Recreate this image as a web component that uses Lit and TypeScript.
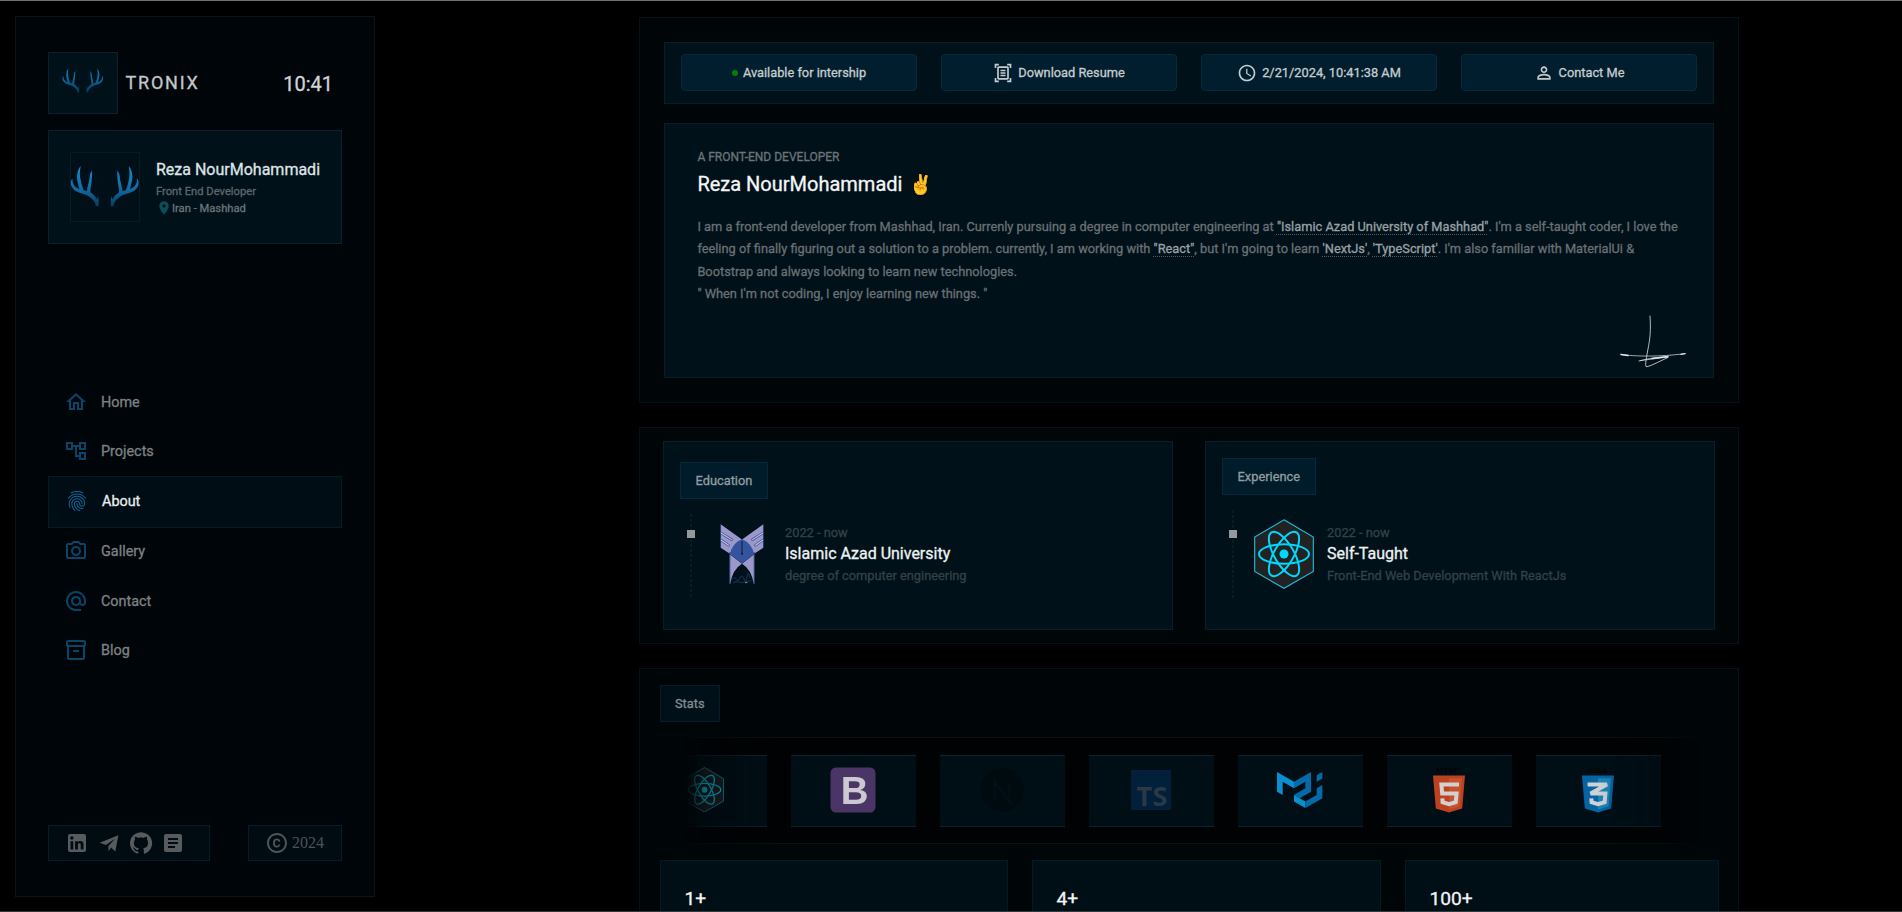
import { LitElement, html, svg, css } from "lit";
import { customElement, state } from "lit/decorators.js";
import { classMap } from "lit/directives/class-map.js";

const ICONS: Record<string, string> = {
  home: "M12 5.69l5 4.5V18h-2v-6H9v6H7v-7.81l5-4.5M12 3L2 12h3v8h6v-6h2v6h6v-8h3L12 3z",
  tree: "M22 11V3h-7v3H9V3H2v8h7V8h2v10h4v3h7v-8h-7v3h-2V8h2v3h7zM7 9H4V5h3v4zm10 6h3v4h-3v-4zm0-10h3v4h-3V5z",
  finger:
    "M17.81 4.47c-.08 0-.16-.02-.23-.06C15.66 3.42 14 3 12.01 3c-1.98 0-3.86.47-5.57 1.41-.24.13-.54.04-.68-.2-.13-.24-.04-.55.2-.68C7.82 2.52 9.86 2 12.01 2c2.13 0 3.99.47 6.03 1.52.25.13.34.43.21.67-.09.18-.26.28-.44.28zM3.5 9.72c-.1 0-.2-.03-.29-.09-.23-.16-.28-.47-.12-.7.99-1.4 2.25-2.5 3.75-3.27C9.98 4.04 14 4.03 17.15 5.65c1.5.77 2.76 1.86 3.75 3.25.16.22.11.54-.12.7-.23.16-.54.11-.7-.12-.9-1.26-2.04-2.25-3.39-2.94-2.87-1.47-6.54-1.47-9.4.01-1.36.7-2.5 1.7-3.4 2.96-.08.14-.23.21-.39.21zm6.25 12.07c-.13 0-.26-.05-.35-.15-.87-.87-1.34-1.43-2.01-2.64-.69-1.23-1.05-2.73-1.05-4.34 0-2.97 2.54-5.39 5.66-5.39s5.66 2.42 5.66 5.39c0 .28-.22.5-.5.5s-.5-.22-.5-.5c0-2.42-2.09-4.39-4.66-4.39-2.57 0-4.66 1.97-4.66 4.39 0 1.44.32 2.77.93 3.85.64 1.15 1.08 1.64 1.85 2.42.19.2.19.51 0 .71-.11.1-.24.15-.37.15zm7.17-1.85c-1.19 0-2.24-.3-3.1-.89-1.49-1.01-2.38-2.65-2.38-4.39 0-.28.22-.5.5-.5s.5.22.5.5c0 1.41.72 2.74 1.94 3.56.71.48 1.54.71 2.54.71.24 0 .64-.03 1.04-.1.27-.05.53.13.58.41.05.27-.13.53-.41.58-.57.11-1.07.12-1.21.12zM14.91 22c-.04 0-.09-.01-.13-.02-1.59-.44-2.63-1.03-3.72-2.1-1.4-1.39-2.17-3.24-2.17-5.22 0-1.62 1.38-2.94 3.08-2.94 1.7 0 3.08 1.32 3.08 2.94 0 1.07.93 1.94 2.08 1.94s2.08-.87 2.08-1.94c0-3.77-3.25-6.83-7.25-6.83-2.84 0-5.44 1.58-6.61 4.03-.39.81-.59 1.76-.59 2.8 0 .78.07 2.01.67 3.61.1.26-.03.55-.29.64-.26.1-.55-.04-.64-.29-.49-1.31-.73-2.61-.73-3.96 0-1.2.23-2.29.68-3.24 1.33-2.79 4.28-4.6 7.51-4.6 4.55 0 8.25 3.51 8.25 7.83 0 1.62-1.38 2.94-3.08 2.94s-3.08-1.32-3.08-2.94c0-1.07-.93-1.94-2.08-1.94s-2.08.87-2.08 1.94c0 1.71.66 3.31 1.87 4.51.95.94 1.86 1.46 3.27 1.85.27.07.42.35.35.61-.05.23-.26.38-.47.38z",
  camera:
    "M14.12 4l1.83 2H20v12H4V6h4.05l1.83-2h4.24M15 2H9L7.17 4H4c-1.1 0-2 .9-2 2v12c0 1.1.9 2 2 2h16c1.1 0 2-.9 2-2V6c0-1.1-.9-2-2-2h-3.17L15 2zm-3 7c1.65 0 3 1.35 3 3s-1.35 3-3 3-3-1.35-3-3 1.35-3 3-3m0-2c-2.76 0-5 2.24-5 5s2.24 5 5 5 5-2.24 5-5-2.24-5-5-5z",
  at: "M12 2C6.48 2 2 6.48 2 12s4.48 10 10 10h5v-2h-5c-4.34 0-8-3.66-8-8s3.66-8 8-8 8 3.66 8 8v1.43c0 .79-.71 1.57-1.5 1.57s-1.5-.78-1.5-1.57V12c0-2.76-2.24-5-5-5s-5 2.24-5 5 2.24 5 5 5c1.38 0 2.64-.56 3.54-1.47.65.89 1.77 1.47 2.96 1.47 1.97 0 3.5-1.6 3.5-3.57V12c0-5.52-4.48-10-10-10zm0 13c-1.66 0-3-1.34-3-3s1.34-3 3-3 3 1.34 3 3-1.34 3-3 3z",
  box: "M20 2H4c-1 0-2 .9-2 2v3.01c0 .72.43 1.34 1 1.69V20c0 1.1 1.1 2 2 2h14c.9 0 2-.9 2-2V8.7c.57-.35 1-.97 1-1.69V4c0-1.1-1-2-2-2zm-1 18H5V9h14v11zm1-13H4V4h16v3zM9 12h6v2H9z",
  linkedin:
    "M19 3a2 2 0 0 1 2 2v14a2 2 0 0 1-2 2H5a2 2 0 0 1-2-2V5a2 2 0 0 1 2-2h14m-.5 15.5v-5.3a3.26 3.26 0 0 0-3.26-3.26c-.85 0-1.84.52-2.32 1.3v-1.11h-2.79v8.37h2.79v-4.93c0-.77.62-1.4 1.39-1.4a1.4 1.4 0 0 1 1.4 1.4v4.93h2.79M6.88 8.56a1.68 1.68 0 0 0 1.68-1.68c0-.93-.75-1.69-1.68-1.69a1.69 1.69 0 0 0-1.69 1.69c0 .93.76 1.68 1.69 1.68m1.39 9.94v-8.37H5.5v8.37h2.77z",
  plane: "M21.4 4.2L2.6 11.7l6.3 2.4L18.3 7.4l-6.9 7.6.1 5.2 2.6-3.6 4.2 4z",
  github:
    "M12 1.27a11 11 0 00-3.48 21.46c.55.09.73-.28.73-.55v-1.84c-3.03.64-3.67-1.46-3.67-1.46-.55-1.29-1.28-1.65-1.28-1.65-.92-.65.1-.65.1-.65 1.1 0 1.73 1.1 1.73 1.1.92 1.65 2.57 1.2 3.21.92a2 2 0 01.64-1.47c-2.47-.27-5.04-1.19-5.04-5.5 0-1.1.46-2.1 1.2-2.84a3.76 3.76 0 010-2.93s.91-.28 3.11 1.1c1.8-.49 3.7-.49 5.5 0 2.1-1.38 3.02-1.1 3.02-1.1a3.76 3.76 0 01.1 2.93c.83.74 1.2 1.74 1.2 2.94 0 4.21-2.57 5.13-5.04 5.4.45.37.82.92.82 2.02v3.03c0 .27.1.64.73.55A11 11 0 0012 1.27",
  article:
    "M19 3H5c-1.1 0-2 .9-2 2v14c0 1.1.9 2 2 2h14c1.1 0 2-.9 2-2V5c0-1.1-.9-2-2-2zm-5 14H7v-2h7v2zm3-4H7v-2h10v2zm0-4H7V7h10v2z",
  copyright:
    "M11.88 9.14c1.28.06 1.61 1.15 1.63 1.66h1.79c-.08-1.98-1.49-3.19-3.45-3.19C9.64 7.61 8 9 8 12.14c0 1.94.93 4.24 3.84 4.24 2.22 0 3.41-1.65 3.44-2.95h-1.79c-.03.59-.45 1.38-1.63 1.44-1.31-.04-1.86-1.06-1.86-2.73 0-2.89 1.28-2.98 1.88-3zM12 2C6.48 2 2 6.48 2 12s4.48 10 10 10 10-4.48 10-10S17.52 2 12 2zm0 18c-4.41 0-8-3.59-8-8s3.59-8 8-8 8 3.59 8 8-3.59 8-8 8z",
  scan: "M7 3H4v3H2V1h5v2zm15 3V1h-5v2h3v3h2zM7 21H4v-3H2v5h5v-2zm13-3v3h-3v2h5v-5h-2zM17 6H7v12h10V6zm2 12c0 1.1-.9 2-2 2H7c-1.1 0-2-.9-2-2V6c0-1.1.9-2 2-2h10c1.1 0 2 .9 2 2v12zM15 8H9v2h6V8zm0 3H9v2h6v-2zm0 3H9v2h6v-2z",
  clock:
    "M11.99 2C6.47 2 2 6.48 2 12s4.47 10 9.99 10C17.52 22 22 17.52 22 12S17.52 2 11.99 2zM12 20c-4.42 0-8-3.58-8-8s3.58-8 8-8 8 3.58 8 8-3.58 8-8 8zm.5-13H11v6l5.25 3.15.75-1.23-4.5-2.67z",
  person:
    "M12 5.9c1.16 0 2.1.94 2.1 2.1s-.94 2.1-2.1 2.1S9.9 9.16 9.9 8s.94-2.1 2.1-2.1m0 9c2.97 0 6.1 1.46 6.1 2.1v1.1H5.9V17c0-.64 3.13-2.1 6.1-2.1M12 4C9.79 4 8 5.79 8 8s1.79 4 4 4 4-1.79 4-4-1.79-4-4-4zm0 9c-2.67 0-8 1.34-8 4v3h16v-3c0-2.66-5.33-4-8-4z",
  pin: "M12 2C8.13 2 5 5.13 5 9c0 5.25 7 13 7 13s7-7.75 7-13c0-3.87-3.13-7-7-7zm0 9.5c-1.38 0-2.5-1.12-2.5-2.5s1.12-2.5 2.5-2.5 2.5 1.12 2.5 2.5-1.12 2.5-2.5 2.5z",
};

const icon = (name: string, size = 24) =>
  html`<svg class="icon" width=${size} height=${size} viewBox="0 0 24 24"><path d=${ICONS[name]} fill-rule="evenodd"></path></svg>`;

const ANTLER =
  "M28.5 54.5L25.6 54C26 50.4 23 47 17.5 43.4C13 41.4 7 41 3.5 37.2C.2 33.5-.2 29 2.6 26.4C2 30.5 3.5 34 7 36L9.4 37C8 31 6 27 7.6 20.5C8.2 17.5 9.4 15.5 10.7 14.2C9.9 19 9.3 22 10.7 28C11.2 32 12.5 35 13.5 38L16.8 39.2C17.8 33 19.6 28 19.8 24C20 22 20.8 20 22 18.5C22.2 23 22 27 21.2 33C20.6 36 20.2 38 20.6 40.5C23.5 42.5 26 45 27 47.5L28 44.3C29 48 28.6 50 28.5 54.5Z";

const antlers = (size: number, dim: boolean) => html`
  <svg class="icon" width=${size} height=${size} viewBox="0 0 70 70" opacity=${dim ? 0.85 : 1}>
    <defs>
      <linearGradient id="ag" gradientUnits="userSpaceOnUse" x1="0" y1="14" x2="0" y2="55">
        <stop offset="0" stop-color="#1390d8"></stop>
        <stop offset=".55" stop-color="#0f6ca6"></stop>
        <stop offset="1" stop-color="#093a58"></stop>
      </linearGradient>
    </defs>
    <path fill="url(#ag)" d=${ANTLER}></path>
    <path fill="url(#ag)" d=${ANTLER} transform="translate(69.4 0) scale(-1 1)"></path>
  </svg>`;

const reactLogo = (w: number, h: number) => html`
  <svg class="icon" width=${w} height=${h} viewBox="0 0 60 70">
    <path d="M30 .8L59.3 18V52.5L30 69.3L.7 52.5V18Z" fill="#222" stroke="#19bfe0" stroke-width="1.1"></path>
    <g fill="none" stroke="#00d8ff" stroke-width="2">
      <ellipse cx="30" cy="35" rx="25" ry="9.8"></ellipse>
      <ellipse cx="30" cy="35" rx="25" ry="9.8" transform="rotate(60 30 35)"></ellipse>
      <ellipse cx="30" cy="35" rx="25" ry="9.8" transform="rotate(120 30 35)"></ellipse>
    </g>
    <circle cx="30" cy="35" r="4.5" fill="#00d8ff"></circle>
  </svg>`;

const wing = svg`
  <path d="M.6 .3L22 15.4Q13 19.5 10.2 30L.6 23.8Z" fill="#9c97ca"></path>
  <path d="M9.6 30L22 39.8Q12.5 45.5 10.2 60H9.6Z" fill="#9c97ca"></path>
  <g fill="none" stroke-linecap="round">
    <path d="M1 9l10.5 6.6M1 16l7.5 5.2" stroke="#3b5391" stroke-width="2.6"></path>
    <path d="M1 9l10.5 6.6M1 16l7.5 5.2" stroke="#c0c4e4" stroke-width="1.1"></path>
  </g>
  <path d="M9.8 28V60M.4 0V24" fill="none" stroke="#1d3567" stroke-width=".8"></path>`;

const azadLogo = html`
  <svg class="icon" width="44" height="62" viewBox="0 0 44 62">
    <g>${wing}</g>
    <g transform="translate(44 0) scale(-1 1)">${wing}</g>
    <path d="M22 15.2Q31.5 19 34.2 30L22 39.6L9.8 30Q12.5 19 22 15.2Z" fill="#35549f"></path>
    <path d="M22 17V29.6" stroke="#0b1a3a" stroke-width="1"></path>
    <circle cx="22" cy="29.8" r="1" fill="#0b1a3a"></circle>
    <path d="M12 55q2-3 4 0t4-1 4 1 3-2 3 1M13 59q3-2 6-1t8-.5 4 0" fill="none" stroke="#16304e" stroke-width="1.1"></path>
    <path d="M25 58.6h2.4" stroke="#7d8fae" stroke-width="1"></path>
  </svg>`;

const shield = (label: string, base: string, light: string, mark: unknown) => html`
  <svg class="icon shield" width="34" height="46" viewBox="0 0 34 46">
    <text x="17" y="6.4" text-anchor="middle" font-size="8" font-weight="700" fill="#000508"
      font-family="Liberation Sans, sans-serif" textLength=${label === "HTML" ? 26 : 19} lengthAdjust="spacingAndGlyphs">${label}</text>
    <path d="M1 8.6H33L30.2 41.4L17 45.4L3.8 41.4Z" fill=${base}></path>
    <path d="M17 11.3H30L27.6 39.3L17 42.4Z" fill=${light}></path>
    ${mark}
  </svg>`;

const logos: Record<string, unknown> = {
  react: reactLogo(39, 45.5),
  bootstrap: html`<svg class="icon" width="46" height="46" viewBox="0 0 46 46">
    <rect x=".5" y=".5" width="45" height="45" rx="5.5" fill="#4b3566"></rect>
    <text x="24.6" y="37" text-anchor="middle" font-family="Liberation Sans, sans-serif" font-weight="700" font-size="38.5" fill="#ccc9d1">B</text>
  </svg>`,
  next: html`<svg class="icon" width="46" height="46" viewBox="0 0 46 46">
    <circle cx="23" cy="23" r="22" fill="#000b10"></circle>
    <path d="M15.5 31V15L33 38M30.5 15V29" fill="none" stroke="#001017" stroke-width="2.4"></path>
  </svg>`,
  ts: html`<svg class="icon ts" width="40" height="40" viewBox="0 0 40 40">
    <rect width="40" height="40" rx="1" fill="#02203a"></rect>
    <text x="5.6" y="36" font-family="Open Sans, sans-serif" font-weight="700" font-size="27" fill="#2a3944" textLength="31" lengthAdjust="spacingAndGlyphs">TS</text>
  </svg>`,
  mui: html`<svg class="icon" width="45.4" height="36" viewBox="0 0 600 476.3">
    <path fill="#0a90d0" d="M0 259.8V0l225 129.9v86.6L75 129.9v173.2z"></path>
    <path fill="#026ba8" d="M225 129.9L450 0v259.8l-150 86.6-75-43.3 150-86.6v-86.6l-150 86.6z"></path>
    <path fill="#0a90d0" d="M225 303.1v86.6l150 86.6v-86.6z"></path>
    <path fill="#026ba8" d="M375 476.3l225-129.9V173.2l-75 43.3v86.6l-150 86.6zM525 129.9V43.3L600 0v86.6z"></path>
  </svg>`,
  html5: shield("HTML", "#bb4120", "#c5532c",
    svg`<path d="M27 17.5H9.4L10.2 26.6H24.6L23.7 35.2L17 37.2L10.6 35.2L10.3 31.4" fill="none" stroke="#d4d0d0" stroke-width="4"></path>`),
  css3: shield("CSS", "#0664a4", "#1c84b9",
    svg`<path d="M6.6 17.5H26L9.6 26.4H24.4L23.7 35.2L17 37.2L10.6 35.2L10.3 31.4" fill="none" stroke="#ced2d5" stroke-width="4"></path>`),
};

interface TimelineEntry {
  tag: string;
  kind: string;
  when: string;
  title: string;
  detail: string;
  logo: unknown;
}

@customElement("app-root")
export class AppRoot extends LitElement {
  @state() private active = "About";

  private nav = [
    ["Home", "home"],
    ["Projects", "tree"],
    ["About", "finger"],
    ["Gallery", "camera"],
    ["Contact", "at"],
    ["Blog", "box"],
  ];

  private timeline: TimelineEntry[] = [
    { tag: "Education", kind: "edu", when: "2022 - now", title: "Islamic Azad University", detail: "degree of computer engineering", logo: azadLogo },
    { tag: "Experience", kind: "exp", when: "2022 - now", title: "Self-Taught", detail: "Front-End Web Development With ReactJs", logo: reactLogo(60, 70) },
  ];

  static styles = css`
    :host {
      display: grid;
      grid-template-columns: 375px 1fr;
      box-sizing: border-box;
      height: 912px;
      width: 100%;
      overflow: hidden;
      border-top: 1px solid #6c6f70;
      border-bottom: 1px solid #33383b;
      background: #000;
      color: #fff;
      font-family: Roboto, sans-serif;
      font-size: 12.8px;
      -webkit-text-stroke: .3px currentColor;
    }
    * { box-sizing: border-box; }
    .icon { display: block; flex: none; fill: currentColor; }
    .icon text { -webkit-text-stroke: 0; }
    p, h1, h2 { margin: 0; font-weight: 400; }

    .side {
      margin: 15px 0 0 15px;
      width: 360px;
      height: 881px;
      padding: 35px 32px;
      display: flex;
      flex-direction: column;
      background: #000509;
      border: 1px solid #0d151b;
    }
    .brand { display: flex; align-items: center; height: 62px; }
    .logo {
      width: 70px; height: 62px;
      display: flex; justify-content: center; padding-top: 7px;
      background: #001119; border: 1px solid #0a202a;
    }
    .name { margin-left: 7.5px; font-size: 18px; letter-spacing: 1.8px; color: #c4c8cb; line-height: 24px; }
    .time { margin-left: auto; padding: 2px 9px 0 0; font-size: 20px; color: #d0d4d6; }
    .profile {
      margin-top: 16px; height: 114px; padding: 0 0 0 21px;
      display: flex; align-items: center;
      background: #001119; border: 1px solid #0a202a;
    }
    .avatar { width: 70px; height: 70px; margin-top: -1px; border: 1px solid #031d24; background: #000f18; display: flex; margin-right: 16px; }
    .avatar .icon { margin: -1px; }
    .who { display: flex; flex-direction: column; white-space: nowrap; padding-top: 4px; }
    .who h2 { font-size: 16px; line-height: 19px; color: #dfe4e7; margin-top: -2px; }
    .who .role { font-size: 11.2px; line-height: 13px; margin-top: 6px; color: #5c676d; }
    .who .place { display: flex; align-items: center; height: 16px; margin-top: 2px; font-size: 11.2px; color: #6a757b; }
    .place .icon { color: #0c4f58; }

    .menu { display: flex; flex-direction: column; margin-top: 134px; }
    .item { height: 49px; padding-left: 16px; display: flex; align-items: center; gap: 13px; font-size: 14.4px; color: #7e8183; }
    .item .icon { color: #0a4467; margin-top: -2px; }
    .item.active {
      height: 52px; margin-bottom: -1px; padding-bottom: 1px;
      background: #000d14; border: 1px solid #041b25; color: #e8ecee;
    }
    .item.active + .item { margin-bottom: 1px; }
    .item.active .icon { color: #0f689c; }
    .foot { margin-top: auto; display: flex; justify-content: space-between; }
    .foot > div {
      height: 36px; display: flex; align-items: center; padding-bottom: 1px;
      background: #000b12; border: 1px solid #061c28; color: #575b5e;
    }
    .foot .links { width: 162px; padding-left: 16px; gap: 8px; }
    .foot .copy { width: 94px; padding-left: 16px; gap: 3px; font: 16px "Liberation Serif", serif; color: #4d5255; -webkit-text-stroke: 0; }
    .copy .icon { color: #4f5457; }

    .main { margin: 16px 0 0 264px; width: 1100px; display: flex; flex-direction: column; gap: 24px; }
    .panel { background: #000508; border: 1px solid #02121a; flex: none; }
    .card { background: #001119; border: 1px solid #041f28; }

    .intro { height: 386px; padding: 24px 24px 0; }
    .actions { height: 62px; padding: 11px 16px 0; display: grid; grid-template-columns: repeat(4, 236px); justify-content: space-between; }
    .btn {
      height: 37px; border-radius: 4px; display: flex; align-items: center; justify-content: center; gap: 5px;
      background: #001e2d; border: 1px solid #052b3a; color: #c6cccf;
    }
    .dot { width: 6px; height: 6px; border-radius: 50%; background: #067d06; }
    .bio { margin-top: 19px; height: 255px; padding: 26px 20px 0 32.4px; display: flex; flex-direction: column; color: #697074; }
    .kicker { font-size: 12px; line-height: 14px; color: #6d7477; }
    .bio h1 { font-size: 20px; line-height: 24px; margin-top: 8px; color: #f4f6f7; }
    .hand { font-size: 19px; margin-left: 2px; }
    .text { line-height: 22.3px; margin-top: 19px; }
    .text b { font-weight: 400; color: #9aa1a5; text-decoration: underline dotted #515a5e 1px; text-underline-offset: 3px; }
    .sign { align-self: flex-end; margin: 10px 7px 0 0; }

    .history { height: 217px; padding: 13px 23px 0; display: grid; grid-template-columns: 510px 510px; justify-content: space-between; }
    .entry { height: 189px; padding-left: 16px; }
    .edu { padding-top: 20px; }
    .exp { padding-top: 16px; }
    .tag {
      display: inline-flex; align-items: center; height: 37px; padding: 0 14.6px;
      background: #001c2a; border: 1px solid #04293a; color: #929ca1; vertical-align: top;
    }
    .row { display: flex; height: 88px; margin-top: 15px; }
    .rail { width: 11px; margin-left: 5px; height: 84px; display: flex; justify-content: center; }
    .exp .rail { height: 88px; }
    .line { width: 2px; background: repeating-linear-gradient(#041d27 0 3px, transparent 3px 5px); position: relative; }
    .knob { position: absolute; left: -3px; top: 16px; width: 8px; height: 8px; background: #949a9c; }
    .exp .knob { top: 20px; }
    .pic { margin: 10px 21px 0 24px; }
    .exp .pic { margin: 9px 13px 0 16px; }
    .info { display: flex; flex-direction: column; margin-top: 11px; color: #344147; }
    .exp .info { margin-top: 15px; }
    .info p { line-height: 15px; }
    .info h2 { font-size: 16px; line-height: 19px; color: #eef1f2; margin: 4px 0 5px; }

    .stats { height: 420px; padding: 16px 20px 0 20px; }
    .stats .tag { background: #001019; border-color: #041d29; color: #838c90; padding: 0 14px; height: 37px; }
    .belt {
      margin: 15px 20px 0 25px; height: 107px; overflow: hidden;
      display: flex; align-items: center; gap: 24px;
      background: #000203; border: solid #0a1013; border-width: 1px 0;
      mask-image: linear-gradient(90deg, transparent 0, rgba(0,0,0,.45) 18px, #000 90px, #000 calc(100% - 100px), rgba(0,0,0,.7) calc(100% - 32px), transparent 100%);
    }
    .tile {
      flex: none; width: 125px; height: 72px; margin-top: 1px; padding-bottom: 3px; display: flex; align-items: center; justify-content: center;
      background: #000f16; border: solid #072530; border-width: 1px 0;
    }
    .tile:first-child { margin-left: -43.5px; }
    .tile .ts { overflow: visible; }
    .counts { margin-top: 16px; display: grid; grid-template-columns: 348px 349px 314px; gap: 24px; margin-right: -4px; }
    .count { height: 120px; padding: 26px 0 0 23.5px; font-size: 19.2px; line-height: 24px; color: #f2f4f5; background: #000e15; border-color: #041a22; }
  `;

  render() {
    return html`
      <aside class="side">
        <div class="brand">
          <div class="logo">${antlers(42, true)}</div>
          <span class="name">TRONIX</span>
          <span class="time">10:41</span>
        </div>
        <div class="profile">
          <div class="avatar">${antlers(70, false)}</div>
          <div class="who">
            <h2>Reza NourMohammadi</h2>
            <span class="role">Front End Developer</span>
            <span class="place">${icon("pin", 16)}Iran - Mashhad</span>
          </div>
        </div>
        <nav class="menu">
          ${this.nav.map(
            ([label, glyph]) => html`
              <div class=${classMap({ item: true, active: label === this.active })} @click=${() => (this.active = label)}>
                ${icon(glyph)}<span>${label}</span>
              </div>`
          )}
        </nav>
        <div class="foot">
          <div class="links">${["linkedin", "plane", "github", "article"].map((n) => icon(n))}</div>
          <div class="copy">${icon("copyright")}<span>2024</span></div>
        </div>
      </aside>

      <main class="main">
        <section class="panel intro">
          <div class="card actions">
            <div class="btn"><span class="dot"></span>Available for intership</div>
            <div class="btn">${icon("scan", 20)}Download Resume</div>
            <div class="btn">${icon("clock", 20)}2/21/2024, 10:41:38 AM</div>
            <div class="btn">${icon("person", 20)}Contact Me</div>
          </div>
          <div class="card bio">
            <p class="kicker">A FRONT-END DEVELOPER</p>
            <h1>Reza NourMohammadi <span class="hand">✌️</span></h1>
            <p class="text">
              I am a front-end developer from Mashhad, Iran. Currenly pursuing a degree in computer engineering at
              <b>"Islamic Azad University of Mashhad"</b>. I'm a self-taught coder, I love the<br />
              feeling of finally figuring out a solution to a problem. currently, I am working with
              <b>"React"</b>, but I'm going to learn <b>'NextJs'</b>, <b>'TypeScript'</b>. I'm also familiar with MaterialUi &amp;<br />
              Bootstrap and always looking to learn new technologies.<br />
              " When I'm not coding, I enjoy learning new things. "
            </p>
            <svg class="sign" width="66" height="54" viewBox="0 0 66 54" fill="none" stroke="#dfe5e8" stroke-linecap="round">
              <path d="M30 1C31 16 30 24 28 34C26.5 42 25 50 26 51.5C28 52.5 38 47 48 42.5" stroke-width=".8"></path>
              <path d="M1 39.4L8 40.6M48 41.4L32 43.4" stroke-width="1.5"></path>
              <path d="M1 39.4C14 41.5 40 42 65 38.6M19 46C30 43 40 42 48 42L20 45.6" stroke-width=".7"></path>
              <path d="M61 39.4L65 38.6" stroke-width="1.4"></path>
            </svg>
          </div>
        </section>

        <section class="panel history">
          ${this.timeline.map(
            (t) => html`
              <div class="card entry ${t.kind}">
                <span class="tag">${t.tag}</span>
                <div class="row">
                  <div class="rail"><div class="line"><i class="knob"></i></div></div>
                  <div class="pic">${t.logo}</div>
                  <div class="info">
                    <p>${t.when}</p>
                    <h2>${t.title}</h2>
                    <p>${t.detail}</p>
                  </div>
                </div>
              </div>`
          )}
        </section>

        <section class="panel stats">
          <span class="tag">Stats</span>
          <div class="belt">
            ${["react", "bootstrap", "next", "ts", "mui", "html5", "css3"].map((n) => html`<div class="tile">${logos[n]}</div>`)}
          </div>
          <div class="counts">
            ${["1+", "4+", "100+"].map((n) => html`<div class="card count">${n}</div>`)}
          </div>
        </section>
      </main>
    `;
  }
}
